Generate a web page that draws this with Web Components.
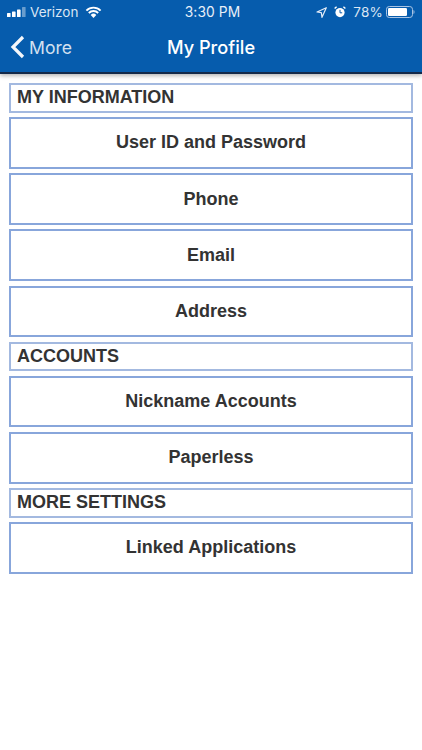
<!DOCTYPE html>
<html><head><meta charset="utf-8">
<style>
html,body{margin:0;padding:0;background:#fff;font-family:"Liberation Sans",Arial,sans-serif;}
body{width:422px;height:750px;overflow:hidden;}
</style></head><body>
<profile-app></profile-app>
<script>
function def(name,html){
  customElements.define(name,class extends HTMLElement{
    constructor(){super();this.attachShadow({mode:"open"}).innerHTML=html;}
  });
}
def("status-bar",`<style>
:host{display:flex;height:24px;box-sizing:border-box;padding:0 7px 0 7px;align-items:center;color:#dbe6f4;font:14px Inter,"Liberation Sans",sans-serif;position:relative}
.l,.r{display:flex;align-items:center}
.l{gap:4px}.r{margin-left:auto;gap:0}
.t{position:absolute;left:3px;right:0;text-align:center;color:#e8eff8;font-size:13.8px;letter-spacing:.1px}
svg{display:block}
</style>
<div class="l">
<svg width="19" height="10" viewBox="0 0 19 10"><rect x="0" y="6" width="3.6" height="4" rx=".6" fill="#fff"/><rect x="5" y="4.5" width="3.6" height="5.5" rx=".6" fill="#fff"/><rect x="10" y="2.5" width="3.6" height="7.5" rx=".6" fill="#fff"/><rect x="15" y="0" width="3.6" height="10" rx=".6" fill="#fff" opacity=".4"/></svg>
<span style="font-size:13.5px">Verizon</span>
<svg width="17" height="12" viewBox="0 0 17 12" style="margin-left:3px"><path d="M8.5 12 5.7 8.9a4 4 0 0 1 5.6 0Z" fill="#fff"/><path d="M1.4 4.6a10 10 0 0 1 14.2 0M3.8 7a6.6 6.6 0 0 1 9.4 0" fill="none" stroke="#fff" stroke-width="1.9"/></svg>
</div>
<span class="t">3:30 PM</span>
<div class="r">
<svg width="11" height="11" viewBox="0 0 11 11" style="margin-right:7px"><path d="M10.3.7 1 5l4.3.7.7 4.6Z" fill="none" stroke="#e4ecf7" stroke-width="1.2" stroke-linejoin="round"/></svg>
<svg width="12" height="12" viewBox="0 0 12 12" style="margin-right:7px"><circle cx="6" cy="6.6" r="4.6" fill="#fff"/><path d="M6 3.8v3h2.2" fill="none" stroke="#0a5cad" stroke-width="1"/><path d="M.6 2.6 2.6.8M11.4 2.6 9.4.8" stroke="#fff" stroke-width="1.4"/></svg>
<span style="font-size:13.5px;letter-spacing:.2px;margin-right:3px">78%</span>
<svg width="29" height="12" viewBox="0 0 29 12"><rect x=".5" y=".5" width="26" height="11" rx="2.8" fill="none" stroke="#a9c4e4"/><rect x="2" y="2" width="19" height="8" rx="1.3" fill="#fff"/><path d="M27.5 4v4a2 2 0 0 0 1-2 2 2 0 0 0-1-2Z" fill="#a9c4e4"/></svg>
</div>`);
def("nav-bar",`<style>
:host{display:flex;height:46px;align-items:center;position:relative;color:#f2f6fb;font:17.6px Inter,"Liberation Sans",sans-serif}
.b{display:flex;align-items:center;padding-left:10px;gap:4px}
.t{position:absolute;left:0;right:0;text-align:center;font-weight:500;color:#fff;font-size:18.2px}
.m{color:#d3e0f0}
svg{display:block}
</style>
<div class="b"><svg width="15" height="24" viewBox="0 0 15 24"><path d="M13 2 3 12l10 10" fill="none" stroke="#f4f7fb" stroke-width="3.2"/></svg><span class="m">More</span></div>
<div class="t">My Profile</div>`);
def("app-header",`<style>
:host{display:block;background:#065cad;border-bottom:2px solid #13294a;box-shadow:0 2px 4px rgba(0,0,0,.28);height:72px;box-sizing:content-box}
</style><slot></slot>`);
def("section-title",`<style>
:host{display:flex;align-items:center;box-sizing:border-box;height:29.5px;border:2px solid #a3b9e0;padding:0 6px;font:bold 18px "Liberation Sans",Arial,sans-serif;color:#333;background:#fff}
</style><slot></slot>`);
def("menu-row",`<style>
:host{display:flex;align-items:center;justify-content:center;box-sizing:border-box;height:51.7px;border:2px solid #88a6db;font:bold 18px "Liberation Sans",Arial,sans-serif;color:#333;background:#fff}
</style><slot></slot>`);
def("profile-list",`<style>
:host{display:flex;flex-direction:column;gap:4.5px;padding:9px 9px 0}
</style><slot></slot>`);
def("profile-app",`<style>:host{display:block}</style>
<app-header><status-bar></status-bar><nav-bar></nav-bar></app-header>
<profile-list>
<section-title>MY INFORMATION</section-title>
<menu-row>User ID and Password</menu-row>
<menu-row>Phone</menu-row>
<menu-row>Email</menu-row>
<menu-row>Address</menu-row>
<section-title>ACCOUNTS</section-title>
<menu-row>Nickname Accounts</menu-row>
<menu-row>Paperless</menu-row>
<section-title>MORE SETTINGS</section-title>
<menu-row>Linked Applications</menu-row>
</profile-list>`);
</script>
</body></html>
